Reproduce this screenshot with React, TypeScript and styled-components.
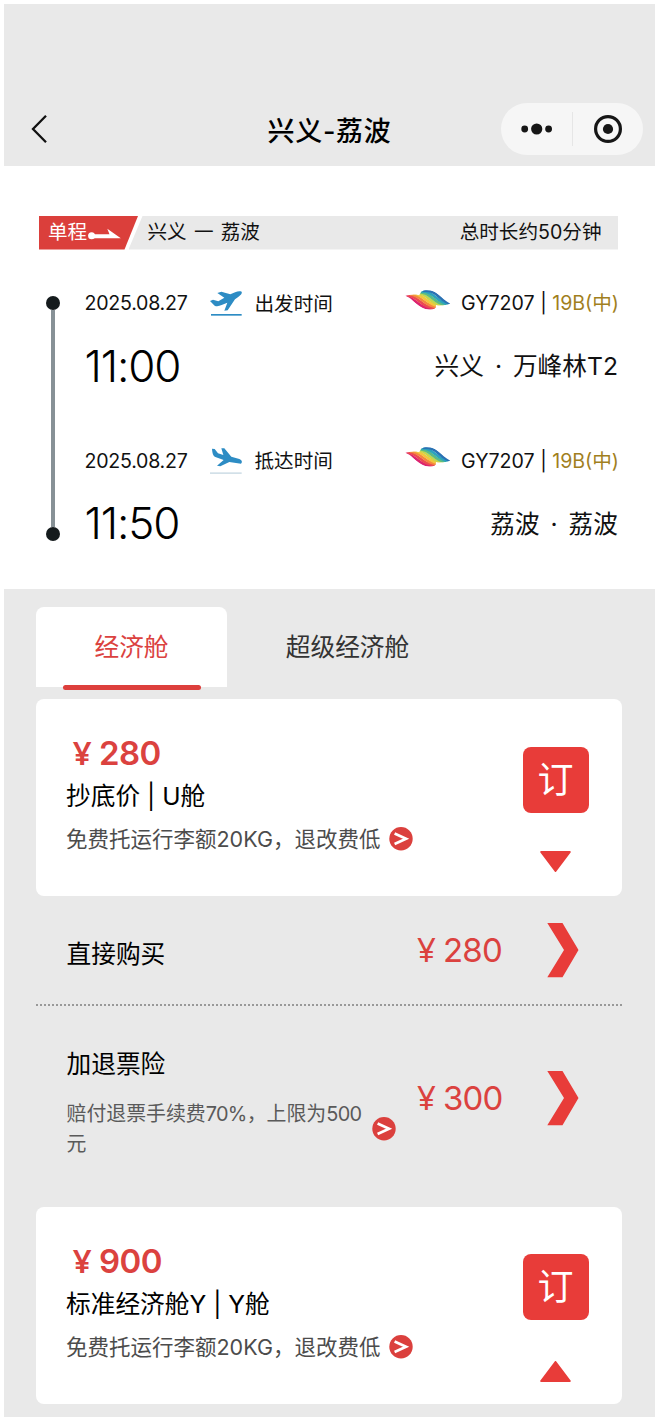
import React from "react";
import styled, { createGlobalStyle } from "styled-components";

const GlobalStyle = createGlobalStyle`
  *, *::before, *::after { box-sizing: border-box; }
  body {
    margin: 0;
    background: #fff;
    font-family: Inter, "Noto Sans CJK SC", sans-serif;
    color: #111;
  }
  svg { display: block; flex: none; }
  button { font: inherit; border: 0; padding: 0; margin: 0; background: none; color: inherit; }
`;

const RED = "#e83c39";
const TEXT_RED = "#db423f";
const GREY = "#e9e9e9";

const Page = styled.main`
  width: 658px;
  height: 1421px;
  padding: 4px 3px 4px 4px;
  overflow: hidden;
`;

const Header = styled.header`
  height: 161.5px;
  padding: 99px 12px 0 27px;
  background: ${GREY};
  display: grid;
  grid-template-columns: 142px 1fr 142px;
  align-items: start;
`;

const BackButton = styled.button`
  height: 52px;
  display: flex;
  align-items: center;
`;

const Title = styled.h1`
  margin: 3px 15px 0 0;
  font-size: 27px;
  line-height: 52px;
  font-weight: 500;
  letter-spacing: 0.7px;
  text-align: center;
  color: #000;
  white-space: nowrap;
`;

const Capsule = styled.div`
  height: 52px;
  border-radius: 26px;
  background: #f6f6f6;
  display: flex;
  align-items: center;
`;

const CapsuleHalf = styled.button`
  flex: 1;
  display: flex;
  justify-content: center;
`;

const CapsuleDivider = styled.span`
  width: 1px;
  height: 34px;
  background: #e6e6e6;
`;

const Itinerary = styled.section`
  height: 423px;
  padding: 50.5px 37px 0 35px;
  background: #fff;
`;

const RouteBar = styled.div`
  display: flex;
  height: 33.5px;
  font-size: 19.6px;
  line-height: 33px;
`;

const TripType = styled.div`
  width: 99px;
  padding-left: 9px;
  background: #db3f3b;
  color: #fff;
  display: flex;
  clip-path: polygon(0 0, 100% 0, 85.5px 100%, 0 100%);
`;

const RouteInfo = styled.div`
  flex: 1;
  margin-left: -9.5px;
  padding: 0 16.5px 0 19px;
  background: ${GREY};
  display: flex;
  justify-content: space-between;
  clip-path: polygon(14px 0, 100% 0, 100% 100%, 0 100%);
`;

const RouteName = styled.span`
  word-spacing: 1.7px;
`;

const Flight = styled.div`
  display: flex;
  margin-top: 39.5px;
`;

const Timeline = styled.div`
  width: 14px;
  height: 244.5px;
  margin: 7px 24.5px 0 7px;
  display: flex;
  flex-direction: column;
  align-items: center;
`;

const Dot = styled.span`
  width: 14px;
  height: 14px;
  border-radius: 50%;
  background: #151b1d;
`;

const Line = styled.span`
  flex: 1;
  width: 3.6px;
  background: #879196;
`;

const Legs = styled.div`
  flex: 1;
  display: flex;
  flex-direction: column;
  gap: 55px;
`;

const Leg = styled.div`
  display: flex;
  flex-direction: column;
  gap: 22.5px;
`;

const LegRow = styled.div<{ $h: number }>`
  height: ${(p) => p.$h}px;
  line-height: ${(p) => p.$h}px;
  font-size: 19.6px;
  display: flex;
  align-items: center;
  white-space: nowrap;
`;

const DateText = styled.span`
  width: 124.5px;
  letter-spacing: -0.25px;
`;

const LegLabel = styled.span`
  margin: 1px 0 0 11.5px;
`;

const FlightNo = styled.span`
  margin: 0 -1px 0 auto;
  display: flex;
  align-items: center;
`;

const FlightCode = styled.span`
  margin-left: 10px;
  white-space: pre;
`;

const Seat = styled.span`
  color: #a17f1e;
`;

const Time = styled.span`
  font-size: 44px;
  font-weight: 350;
  letter-spacing: -1.1px;
  color: #000;
`;

const Place = styled.span`
  margin: 1px 0 0 auto;
  font-size: 24.7px;
  word-spacing: 4px;
`;

const Cabins = styled.section`
  height: 828.5px;
  padding: 18.5px 33px 0 32px;
  background: ${GREY};
`;

const Tabs = styled.nav`
  display: flex;
  height: 80px;
  margin-bottom: 12px;
`;

const Tab = styled.button<{ $active?: boolean }>`
  width: 191px;
  margin-right: ${(p) => (p.$active ? 25 : 0)}px;
  border-radius: 8px 8px 0 0;
  background: ${(p) => (p.$active ? "#fff" : "transparent")};
  color: ${(p) => (p.$active ? TEXT_RED : "#333")};
  font-size: 24.7px;
  line-height: 78px;
  padding-top: 1px;
  display: flex;
  flex-direction: column;
  align-items: center;
`;

const TabMark = styled.span`
  flex: none;
  width: 138px;
  height: 5px;
  margin-top: -1px;
  border-radius: 3px;
  background: #dd3f3c;
`;

const FareCard = styled.article`
  height: 197px;
  padding: 0 33.5px 0 30px;
  border-radius: 8px;
  background: #fff;
  display: flex;
  justify-content: space-between;
`;

const FareInfo = styled.div`
  padding-top: 34px;
`;

const FarePrice = styled.div`
  font-size: 33px;
  line-height: 40px;
  font-weight: 600;
  letter-spacing: -0.6px;
  color: ${TEXT_RED};
`;

const Yen = styled.span`
  display: inline-block;
  width: 33px;
  padding-right: 1px;
  line-height: 1;
  text-align: center;
  font-family: "Noto Sans", sans-serif;
`;

const FareName = styled.div`
  margin-top: 1px;
  font-size: 24.7px;
  line-height: 44px;
  color: #000;
`;

const FareNote = styled.div`
  display: flex;
  align-items: center;
  gap: 8.5px;
  font-size: 21.5px;
  line-height: 42px;
  color: #4c4c4c;
`;

const FareActions = styled.div<{ $gap: number }>`
  padding-top: 47.5px;
  display: flex;
  flex-direction: column;
  align-items: center;
  gap: ${(p) => p.$gap}px;
`;

const BookButton = styled.button`
  width: 66px;
  height: 66px;
  border-radius: 8px;
  background: ${RED};
  color: #fff;
  font-size: 36px;
  line-height: 66px;
  text-align: center;
`;

const Option = styled.div<{ $h: number; $line?: boolean }>`
  height: ${(p) => p.$h}px;
  padding: 0 43px 0 30.5px;
  border-bottom: ${(p) => (p.$line ? "2px dotted #999" : "0")};
  display: flex;
  align-items: flex-start;
`;

const OptionText = styled.div<{ $top: number }>`
  width: 351px;
  padding-top: ${(p) => p.$top}px;
`;

const OptionTitle = styled.div`
  font-size: 24.7px;
  line-height: 40px;
  color: #000;
`;

const OptionNote = styled.div`
  margin-top: 15px;
  display: flex;
  align-items: center;
  gap: 6.5px;
  font-size: 19.9px;
  line-height: 30px;
  color: #5a5a5a;
`;

const NoteText = styled.span`
  width: 299px;
`;

const Figure = styled.span`
  letter-spacing: -0.7px;
`;

const OptionBuy = styled.div<{ $top: number }>`
  flex: 1;
  padding-top: ${(p) => p.$top}px;
  display: flex;
  align-items: center;
  justify-content: space-between;
`;

const OptionPrice = styled.span`
  margin-left: -7.5px;
  font-size: 33px;
  line-height: 55px;
  letter-spacing: -0.8px;
  color: ${TEXT_RED};
`;

const BackIcon = () => (
  <svg width="18" height="30" viewBox="0 0 18 30" fill="none" stroke="#111" strokeWidth="2.3">
    <path d="M15 1.8 2 15l13 13.2" />
  </svg>
);

const MoreIcon = () => (
  <svg width="32" height="12" viewBox="0 0 32 12" fill="#161616">
    <circle cx="4.7" cy="6" r="3.4" />
    <circle cx="16.7" cy="6" r="5.6" />
    <circle cx="28.6" cy="6" r="3.4" />
  </svg>
);

const TargetIcon = () => (
  <svg width="30" height="30" viewBox="0 0 30 30">
    <circle cx="15" cy="15" r="12.4" fill="none" stroke="#161616" strokeWidth="3.2" />
    <circle cx="15" cy="15" r="5.1" fill="#161616" />
  </svg>
);

const OneWayArrow = () => (
  <svg width="34" height="33" viewBox="0 0 34 33" fill="#fff">
    <circle cx="4.6" cy="19.8" r="3.5" />
    <path d="M4.5 18.2H22.5L20.3 12.8 33.8 22.2H4.5z" />
  </svg>
);

const DepartIcon = () => (
  <svg width="34" height="27" viewBox="537 60 102 81" fill="#2d8cc4">
    <path d="M635 65C627 61 614 66 601 73L574 65 562 69 583 83 565 94 549 89 540 93 554 107C561 110 568 108 575 105L592 98 583 122 593 121 615 88C627 79 638 72 635 65Z" />
    <path d="M543 132h92v5h-92z" />
  </svg>
);

const ArriveIcon = () => (
  <svg width="34" height="27" viewBox="537 52 102 81" fill="#2d8cc4">
    <path d="M546 57L554 58 564 71 580 76 574 56 583 56 604 81 628 88C636 91 638 98 633 102L598 97 571 110 561 108 581 91 556 82C549 78 547 71 546 57Z" />
    <path d="M540 129h95v2.4h-95z" fill="#9fbccd" />
  </svg>
);

const LogoSvg = styled.svg`
  margin-bottom: 7px;
`;

const FEATHERS = ["#dc2470", "#ec4a52", "#f4883f", "#f3c63c", "#c3d64c", "#5cbb84", "#2ba3bd", "#2a72b4"];

const featherPath = (t: number) => {
  const mix = (a: number, b: number) => (a + (b - a) * t).toFixed(1);
  return (
    `M${mix(12, 66)} ${mix(35, 19)}` +
    `C${mix(42, 108)} ${mix(37, 14)} ${mix(54, 116)} ${mix(76, 50)} ${mix(102, 150)} ${mix(74, 58)}`
  );
};

const AirlineLogo = () => (
  <LogoSvg width="46" height="22" viewBox="13 14 138 66">
    <clipPath id="wings">
      <path d="M14 34C30 31 44 31 56 33L62 22C76 15 98 17 112 29C124 40 136 52 149 58C134 62 120 64 106 62L104 71C92 79 70 77 55 66C41 54 32 41 14 34Z" />
    </clipPath>
    <g clipPath="url(#wings)" fill="none" strokeWidth="8.2">
      {FEATHERS.map((color, i) => (
        <path key={color} stroke={color} d={featherPath(i / (FEATHERS.length - 1))} />
      ))}
    </g>
  </LogoSvg>
);

const MoreBadge = () => (
  <svg width="24" height="24" viewBox="0 0 24 24">
    <circle cx="12" cy="11.8" r="11.7" fill="#db403d" />
    <path d="M5.6 6.6 17 11.8 5.6 17" fill="none" stroke="#fff" strokeWidth="2.7" />
  </svg>
);

const Triangle = ({ up }: { up?: boolean }) => (
  <svg width="31" height="21" viewBox="0 0 31 21" fill={RED} stroke={RED} strokeWidth="2" strokeLinejoin="round">
    <path d={up ? "M1.2 20h28.6L15.5 1z" : "M1.2 1h28.6L15.5 20z"} />
  </svg>
);

const Chevron = () => (
  <svg width="32" height="55" viewBox="0 0 32 55" fill={RED}>
    <path d="M.3 0H15.5L31.5 27 15.5 54.3H.3L17 27z" />
  </svg>
);

const legs = [
  { date: "2025.08.27", label: "出发时间", time: "11:00", place: "兴义 · 万峰林T2", Icon: DepartIcon },
  { date: "2025.08.27", label: "抵达时间", time: "11:50", place: "荔波 · 荔波", Icon: ArriveIcon },
];

const Fare = ({ price, name, up }: { price: string; name: string; up?: boolean }) => (
  <FareCard>
    <FareInfo>
      <FarePrice><Yen>¥</Yen>{price}</FarePrice>
      <FareName>{name}</FareName>
      <FareNote>
        免费托运行李额20KG，退改费低
        <MoreBadge />
      </FareNote>
    </FareInfo>
    <FareActions $gap={up ? 40.5 : 38.5}>
      <BookButton>订</BookButton>
      <Triangle up={up} />
    </FareActions>
  </FareCard>
);

export default function App() {
  return (
    <Page>
      <GlobalStyle />
      <Header>
        <BackButton aria-label="返回"><BackIcon /></BackButton>
        <Title>兴义-荔波</Title>
        <Capsule>
          <CapsuleHalf><MoreIcon /></CapsuleHalf>
          <CapsuleDivider />
          <CapsuleHalf><TargetIcon /></CapsuleHalf>
        </Capsule>
      </Header>
      <Itinerary>
        <RouteBar>
          <TripType>单程<OneWayArrow /></TripType>
          <RouteInfo>
            <RouteName>兴义 一 荔波</RouteName>
            <span>总时长约50分钟</span>
          </RouteInfo>
        </RouteBar>
        <Flight>
          <Timeline><Dot /><Line /><Dot /></Timeline>
          <Legs>
            {legs.map(({ date, label, time, place, Icon }) => (
              <Leg key={label}>
                <LegRow $h={28}>
                  <DateText>{date}</DateText>
                  <Icon />
                  <LegLabel>{label}</LegLabel>
                  <FlightNo>
                    <AirlineLogo />
                    <FlightCode>GY7207 | </FlightCode>
                    <Seat>19B(中)</Seat>
                  </FlightNo>
                </LegRow>
                <LegRow $h={52}>
                  <Time>{time}</Time>
                  <Place>{place}</Place>
                </LegRow>
              </Leg>
            ))}
          </Legs>
        </Flight>
      </Itinerary>
      <Cabins>
        <Tabs>
          <Tab $active>经济舱<TabMark /></Tab>
          <Tab>超级经济舱</Tab>
        </Tabs>
        <Fare price="280" name="抄底价 | U舱" />
        <Option $h={110} $line>
          <OptionText $top={38}>
            <OptionTitle>直接购买</OptionTitle>
          </OptionText>
          <OptionBuy $top={27}>
            <OptionPrice><Yen>¥</Yen>280</OptionPrice>
            <Chevron />
          </OptionBuy>
        </Option>
        <Option $h={200.5}>
          <OptionText $top={37.5}>
            <OptionTitle>加退票险</OptionTitle>
            <OptionNote>
              <NoteText>
                赔付退票手续费<Figure>70%</Figure>，上限为<Figure>500</Figure>元
              </NoteText>
              <MoreBadge />
            </OptionNote>
          </OptionText>
          <OptionBuy $top={64.5}>
            <OptionPrice><Yen>¥</Yen>300</OptionPrice>
            <Chevron />
          </OptionBuy>
        </Option>
        <Fare price="900" name="标准经济舱Y | Y舱" up />
      </Cabins>
    </Page>
  );
}
